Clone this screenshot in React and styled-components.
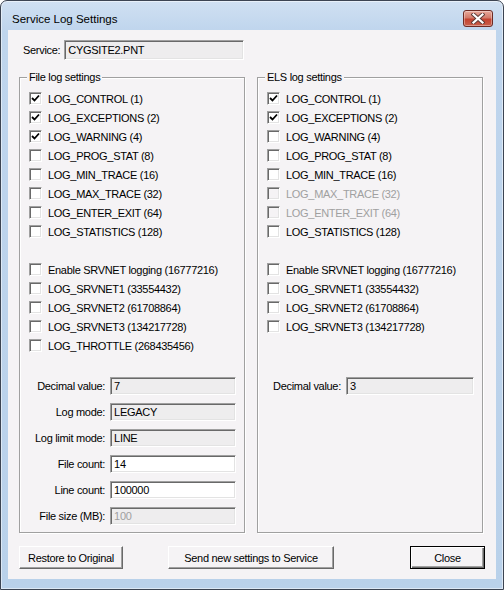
import React from "react";
import styled, { createGlobalStyle } from "styled-components";

/* ---------- Styles ---------- */

const GlobalStyle = createGlobalStyle`
  html, body {
    margin: 0;
    padding: 0;
    background: #ffffff;
  }
  * {
    box-sizing: border-box;
  }
`;

const FACE = "#f5f3f5";

const Window = styled.div`
  width: 504px;
  height: 590px;
  border: 1px solid #3c4452;
  border-radius: 7px 7px 0 0;
  background: linear-gradient(#d0e0f2, #bfd5ed 30px, #b9d1ea);
  box-shadow: inset 0 0 0 1px rgba(255, 255, 255, 0.5);
  display: flex;
  flex-direction: column;
  padding: 0 7px 10px;
  font-family: "Liberation Sans", Arial, sans-serif;
`;

const TitleBar = styled.div`
  height: 29px;
  display: flex;
  align-items: flex-start;
  justify-content: space-between;
  padding: 8px 3px 0 4px;
`;

const Title = styled.div`
  font-size: 11.5px;
  line-height: 20px;
  color: #000;
`;

const CloseX = styled.div`
  width: 30px;
  height: 17px;
  margin-top: 1px;
  border: 1px solid #6d2b24;
  border-radius: 3px;
  background: linear-gradient(#e9a99b, #d27a6a 45%, #c4422f 55%, #c9604c);
  box-shadow: inset 0 0 0 1px rgba(255, 255, 255, 0.35);
  display: flex;
  align-items: center;
  justify-content: center;
`;

const Client = styled.div`
  flex: 1;
  background: ${FACE};
  display: flex;
  flex-direction: column;
  padding: 10px 13px 0 11px;
  font-size: 11px;
  letter-spacing: -0.3px;
  color: #000;
`;

const ServiceRow = styled.div`
  display: flex;
  align-items: center;
  gap: 4px;
  padding-left: 4px;
  height: 20px;
`;

const Field = styled.div`
  width: ${({ $w }) => ($w ? `${$w}px` : "auto")};
  height: ${({ $h }) => $h || 18}px;
  border-top: 1px solid #a0a0a0;
  border-left: 1px solid #a0a0a0;
  border-bottom: 1px solid #ffffff;
  border-right: 1px solid #ffffff;
  box-shadow: inset 1px 1px 0 #696969, inset -1px -1px 0 #e3e3e3;
  background: ${({ $editable }) => ($editable ? "#ffffff" : "#eeedee")};
  color: ${({ $disabled }) => ($disabled ? "#a0a0a0" : "#000")};
  padding: 0 3px;
  display: flex;
  align-items: center;
  white-space: nowrap;
`;

const Groups = styled.div`
  display: grid;
  grid-template-columns: 226px 226px;
  gap: 12px;
  margin-top: 17px;
`;

const Group = styled.div`
  position: relative;
  border: 1px solid #a0a0a0;
  box-shadow: inset 1px 1px 0 #ffffff, 1px 1px 0 #ffffff;
  padding: 11px 0 7px;
  display: flex;
  flex-direction: column;
`;

const Caption = styled.div`
  position: absolute;
  top: -7px;
  left: 7px;
  padding: 0 2px;
  line-height: 13px;
  background: ${FACE};
`;

const CheckList = styled.div`
  display: flex;
  flex-direction: column;
  padding-left: 9px;
`;

const CheckRow = styled.div`
  height: 19px;
  display: flex;
  align-items: center;
  gap: 6px;
  white-space: nowrap;
  color: ${({ $disabled }) => ($disabled ? "#a0a0a0" : "#000")};
`;

const Box = styled.div`
  width: 13px;
  height: 13px;
  flex-shrink: 0;
  border-top: 1px solid #a0a0a0;
  border-left: 1px solid #a0a0a0;
  border-bottom: 1px solid #ffffff;
  border-right: 1px solid #ffffff;
  box-shadow: inset 1px 1px 0 #696969, inset -1px -1px 0 #e3e3e3;
  background: ${({ $disabled }) => ($disabled ? FACE : "#ffffff")};
  display: flex;
  align-items: center;
  justify-content: center;
`;

const Spacer = styled.div`
  height: 19px;
`;

const FormGrid = styled.div`
  display: grid;
  grid-template-columns: auto 1fr;
  column-gap: 5px;
  row-gap: 8px;
  margin-top: 22px;
  padding: 0 8px 0 15px;
`;

const Label = styled.div`
  text-align: right;
  align-self: center;
  white-space: nowrap;
`;

const Buttons = styled.div`
  display: flex;
  margin-top: 13px;
  margin-right: -2px;
`;

const Button = styled.div`
  width: ${({ $w }) => $w}px;
  height: 23px;
  margin-left: ${({ $ml }) => $ml || "0"};
  background: ${FACE};
  border: 1px solid;
  border-color: ${({ $default }) =>
    $default ? "#000" : "#ffffff #696969 #696969 #ffffff"};
  box-shadow: ${({ $default }) =>
    $default
      ? "inset 1px 1px 0 #ffffff, inset -1px -1px 0 #696969, inset -2px -2px 0 #a0a0a0"
      : "inset -1px -1px 0 #a0a0a0"};
  display: flex;
  align-items: center;
  justify-content: center;
  white-space: nowrap;
`;

/* ---------- Data ---------- */

const fileChecks = [
  ["LOG_CONTROL (1)", true],
  ["LOG_EXCEPTIONS (2)", true],
  ["LOG_WARNING (4)", true],
  ["LOG_PROG_STAT (8)"],
  ["LOG_MIN_TRACE (16)"],
  ["LOG_MAX_TRACE (32)"],
  ["LOG_ENTER_EXIT (64)"],
  ["LOG_STATISTICS (128)"],
  null,
  ["Enable SRVNET logging (16777216)"],
  ["LOG_SRVNET1 (33554432)"],
  ["LOG_SRVNET2 (61708864)"],
  ["LOG_SRVNET3 (134217728)"],
  ["LOG_THROTTLE (268435456)"],
];

const elsChecks = [
  ["LOG_CONTROL (1)", true],
  ["LOG_EXCEPTIONS (2)", true],
  ["LOG_WARNING (4)"],
  ["LOG_PROG_STAT (8)"],
  ["LOG_MIN_TRACE (16)"],
  ["LOG_MAX_TRACE (32)", false, true],
  ["LOG_ENTER_EXIT (64)", false, true],
  ["LOG_STATISTICS (128)"],
  null,
  ["Enable SRVNET logging (16777216)"],
  ["LOG_SRVNET1 (33554432)"],
  ["LOG_SRVNET2 (61708864)"],
  ["LOG_SRVNET3 (134217728)"],
  null,
];

const fileFields = [
  ["Decimal value:", "7"],
  ["Log mode:", "LEGACY"],
  ["Log limit mode:", "LINE"],
  ["File count:", "14", true],
  ["Line count:", "100000", true],
  ["File size (MB):", "100", false, true],
];

/* ---------- Component ---------- */

const Tick = () => (
  <svg width="9" height="9" viewBox="0 0 9 9">
    <path d="M1 4 L3.5 6.5 L8 1.5" fill="none" stroke="#000" strokeWidth="1.8" />
  </svg>
);

const Checks = ({ items }) => (
  <CheckList>
    {items.map((item, i) =>
      item ? (
        <CheckRow key={i} $disabled={item[2]}>
          <Box $disabled={item[2]}>{item[1] && <Tick />}</Box>
          {item[0]}
        </CheckRow>
      ) : (
        <Spacer key={i} />
      )
    )}
  </CheckList>
);

const App = () => (
  <>
    <GlobalStyle />
    <Window>
      <TitleBar>
        <Title>Service Log Settings</Title>
        <CloseX>
          <svg width="14" height="11" viewBox="0 0 14 11">
            <path
              d="M2.5 1.5 L11.5 9.5 M11.5 1.5 L2.5 9.5"
              stroke="#5a3a36"
              strokeWidth="4"
              strokeLinecap="square"
            />
            <path
              d="M2.5 1.5 L11.5 9.5 M11.5 1.5 L2.5 9.5"
              stroke="#ffffff"
              strokeWidth="2.2"
              strokeLinecap="square"
            />
          </svg>
        </CloseX>
      </TitleBar>

      <Client>
        <ServiceRow>
          Service:
          <Field $w={180} $h={20}>CYGSITE2.PNT</Field>
        </ServiceRow>

        <Groups>
          <Group>
            <Caption>File log settings</Caption>
            <Checks items={fileChecks} />
            <FormGrid>
              {fileFields.map(([label, value, editable, disabled]) => (
                <React.Fragment key={label}>
                  <Label>{label}</Label>
                  <Field $editable={editable} $disabled={disabled}>
                    {value}
                  </Field>
                </React.Fragment>
              ))}
            </FormGrid>
          </Group>

          <Group>
            <Caption>ELS log settings</Caption>
            <Checks items={elsChecks} />
            <FormGrid>
              <Label>Decimal value:</Label>
              <Field>3</Field>
            </FormGrid>
          </Group>
        </Groups>

        <Buttons>
          <Button $w={104}>Restore to Original</Button>
          <Button $w={166} $ml="45px">
            Send new settings to Service
          </Button>
          <Button $w={75} $ml="auto" $default>
            Close
          </Button>
        </Buttons>
      </Client>
    </Window>
  </>
);

export default App;
